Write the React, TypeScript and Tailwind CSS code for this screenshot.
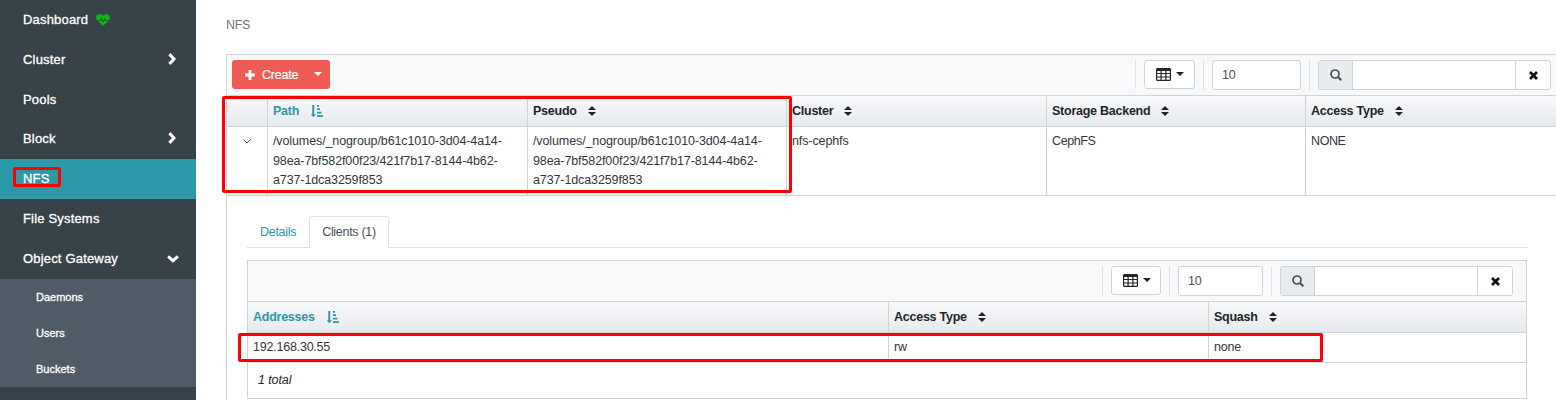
import React from "react";

const RED = "pointer-events-none absolute rounded-[2px] border-[3px] border-[#ff0000]";

function Heartbeat() {
  return (
    <svg className="h-[12px] w-[14px]" viewBox="0 0 14 12">
      <path fill="#0ab80a" d="M7 12 1.500 6.700H4.700L5.400 5.300 7.100 8.700 8.800 5.900 9.300 6.700H12.500ZM.7 5.900C-.6 4 0 0 3.700 0 5.400 0 6.300 1 7 1.800 7.700 1 8.600 0 10.300 0 14 0 14.600 4 13.300 5.900H9.800L8.800 3.900 7.200 6.900 5.500 3.300 4.200 5.900Z" />
    </svg>
  );
}
function Chevron({ down = false }: { down?: boolean }) {
  return down ? (
    <svg className="h-[8px] w-[12px]" viewBox="0 0 12 8" fill="none" stroke="#fff" strokeWidth="3">
      <path d="M1.100 1.400 6 5.700 10.900 1.400" />
    </svg>
  ) : (
    <svg className="mr-[3px] mb-[2px] h-[12px] w-[8px]" viewBox="0 0 8 12" fill="none" stroke="#fff" strokeWidth="3">
      <path d="M1.400 1.100 6 6 1.400 10.900" />
    </svg>
  );
}
function TableIcon() {
  return (
    <svg className="h-[13px] w-[15px]" viewBox="0 0 15 13">
      <path fill="#212529" fillRule="evenodd" d="M1 0H14L15 1V12L14 13H1L0 12V1ZM1.200 3V5H4.500V3ZM5.700 3V5H9.300V3ZM10.500 3V5H13.800V3ZM1.200 6V8.500H4.500V6ZM5.700 6V8.500H9.300V6ZM10.500 6V8.500H13.800V6ZM1.200 9.500V11.800H4.500V9.500ZM5.700 9.500V11.800H9.300V9.500ZM10.500 9.500V11.800H13.800V9.500Z" />
    </svg>
  );
}
function SearchIcon() {
  return (
    <svg className="h-[12px] w-[12px]" viewBox="0 0 12 12" fill="none" stroke="#495057" strokeWidth="1.7">
      <circle cx="5" cy="5" r="4" />
      <path d="m8 8 3.300 3.300" strokeWidth="2.100" />
    </svg>
  );
}
function CloseIcon() {
  return (
    <svg className="h-[9px] w-[9px]" viewBox="0 0 9 9" stroke="#111" strokeWidth="2.800">
      <path d="m1 1 7 7M8 1 1 8" />
    </svg>
  );
}
function Sort() {
  return (
    <svg className="mb-[1px] ml-[11px] h-[10px] w-[8px]" viewBox="0 0 8 10" fill="#212529">
      <path d="M4 0 8 4H0ZM0 6H8L4 10Z" />
    </svg>
  );
}
function SortAmount() {
  return (
    <svg className="ml-[12px] h-[13px] w-[12px]" viewBox="0 0 12 13" fill="#2b99a8">
      <path d="M1.300 0H3.200V9.200H4.900L2.300 12.200-.3 9.200H1.300ZM6 0H8V1.700H6ZM6 3.300H9V5H6ZM6 6.700H10.500V8.400H6ZM6 10.200H12V12H6Z" />
    </svg>
  );
}
function Caret({ color = "#212529" }: { color?: string }) {
  return (
    <svg className="h-[4px] w-[8px]" viewBox="0 0 8 4">
      <path fill={color} d="M0 0H8L4 4Z" />
    </svg>
  );
}

function NavItem({ label, cls = "h-[40px]", children }: { label: string; cls?: string; children?: React.ReactNode }) {
  return (
    <div className={`flex items-center pr-[17px] pl-[23px] text-[13px] tracking-[0.18px] text-white [-webkit-text-stroke:0.3px] ${cls}`}>
      <span>{label}</span>
      {children}
    </div>
  );
}

function Tools({ inner = false }: { inner?: boolean }) {
  return (
    <div className="flex h-[30px] items-start">
      <div className="h-[29px] w-px bg-[#dee2e6]" />
      <div className={`ml-[8px] flex h-[29px] items-center gap-[5px] rounded-[3px] border border-[#ced4da] bg-white pb-[1px] pl-[11px] ${inner ? "w-[50px]" : "w-[51px]"}`}>
        <TableIcon />
        <Caret />
      </div>
      <div className="ml-[8px] h-[30px] w-px bg-[#dee2e6]" />
      <div className={`ml-[8px] flex h-[30px] items-center rounded-[3px] border border-[#ced4da] bg-white pl-[9px] tracking-[-0.3px] text-[#495057] ${inner ? "w-[85px]" : "w-[89px]"}`}>10</div>
      <div className="ml-[8px] h-[30px] w-px bg-[#dee2e6]" />
      <div className="ml-[8px] flex h-[30px] w-[233px] overflow-hidden rounded-[3px] border border-[#ced4da] bg-white">
        <div className="flex w-[34px] items-center justify-center border-r border-[#ced4da] bg-[#e9ecef]"><SearchIcon /></div>
        <div className="flex-1" />
        <div className="flex w-[35px] items-center justify-center border-l border-[#ced4da]"><CloseIcon /></div>
      </div>
    </div>
  );
}

const HEAD = "flex h-[32px] border-y border-[#ced4da] bg-linear-to-b from-[#f8f9fb] to-[#e7eaed] font-bold tracking-[-0.25px]";
const CELL = "flex shrink-0 items-center border-r border-[#ced4da] pl-[5px]";
const PATH = "/volumes/_nogroup/b61c1010-3d04-4a14-\n98ea-7bf582f00f23/421f7b17-8144-4b62-\na737-1dca3259f853";

export default function App() {
  return (
    <div className="relative flex h-[400px] w-[1556px] overflow-hidden bg-white font-['Liberation_Sans',sans-serif] text-[12.5px] text-[#212529]">
      <nav className="h-full w-[196px] shrink-0 bg-[#374249]">
        <NavItem label="Dashboard" cls="h-[39px]"><span className="ml-[8px]"><Heartbeat /></span></NavItem>
        <NavItem label="Cluster" cls="h-[41px]"><span className="ml-auto"><Chevron /></span></NavItem>
        <NavItem label="Pools" cls="h-[39px]" />
        <NavItem label="Block"><span className="ml-auto"><Chevron /></span></NavItem>
        <NavItem label="NFS" cls="h-[40px] bg-[#2b99a8] text-[#dceff1]" />
        <NavItem label="File Systems" />
        <NavItem label="Object Gateway"><span className="ml-auto"><Chevron down /></span></NavItem>
        <div className="bg-[#4f5b66] text-[11px] text-white [-webkit-text-stroke:0.3px]">
          <div className="flex h-[36px] items-center pl-[36px]">Daemons</div>
          <div className="flex h-[36px] items-center pl-[36px]">Users</div>
          <div className="flex h-[36px] items-center pl-[36px]">Buckets</div>
        </div>
      </nav>

      <main className="flex-1 overflow-hidden pl-[30px]">
        <div className="flex h-[54px] items-center pb-[3px] tracking-[-0.3px] text-[#6c757d]">NFS</div>
        <section className="h-[346px] border-t border-l border-[#ced4da]">
          <div className="flex h-[40px] items-start justify-between bg-[#f8f9fb] pt-[5px] pr-[5px] pl-[5px]">
            <div className="flex h-[29px] w-[98px] items-center rounded-[3px] bg-[#ef5c55] pl-[13px] text-white [-webkit-text-stroke:0.2px]">
              <svg className="h-[10px] w-[10px]" viewBox="0 0 10 10" stroke="#fff" strokeWidth="2.800"><path d="M5 0V10M0 5H10" /></svg>
              <span className="ml-[7px] w-[52px] pt-[1px] tracking-[-0.2px]">Create</span>
              <span className="flex pb-[2px]"><Caret color="#fff" /></span>
            </div>
            <Tools />
          </div>
          <div className={HEAD}>
            <div className={`${CELL} w-[41px]`} />
            <div className={`${CELL} w-[260px] text-[#2b99a8]`}>Path<SortAmount /></div>
            <div className={`${CELL} w-[259px]`}>Pseudo<Sort /></div>
            <div className={`${CELL} w-[260px]`}>Cluster<Sort /></div>
            <div className={`${CELL} w-[259px]`}>Storage Backend<Sort /></div>
            <div className="flex flex-1 items-center pl-[5px]">Access Type<Sort /></div>
          </div>
          <div className="flex h-[69px] border-b border-[#ced4da] leading-[19.5px] tracking-[-0.11px] whitespace-pre text-[#33373b] [&>div]:items-start [&>div]:pt-[5px]">
            <div className={`${CELL} w-[41px]`}>
              <svg className="mt-[7px] ml-[11px] h-[5px] w-[8px]" viewBox="0 0 8 5" fill="none" stroke="#495057"><path d="M.5.5 4 4 7.500.5" /></svg>
            </div>
            <div className={`${CELL} w-[260px]`}>{PATH}</div>
            <div className={`${CELL} w-[259px]`}>{PATH}</div>
            <div className={`${CELL} w-[260px]`}>nfs-cephfs</div>
            <div className={`${CELL} w-[259px] tracking-[-0.4px]`}>CephFS</div>
            <div className="flex flex-1 pl-[5px] tracking-[-0.4px]">NONE</div>
          </div>

          <div className="pt-[20px] pl-[20px]">
            <div className="flex h-[32px] w-[1281px] border-b border-[#dee2e6] tracking-[-0.3px]">
              <div className="flex w-[62px] items-center pt-[1px] pl-[13px] text-[#2b99a8]">Details</div>
              <div className="flex h-[32px] w-[80px] items-center justify-center rounded-t-[3px] border border-b-0 border-[#dee2e6] bg-white text-[#495057]">Clients (1)</div>
            </div>
            <div className="mt-[12px] h-[139px] w-[1280px] border border-[#ced4da]">
              <div className="flex h-[40px] items-start justify-end bg-[#f8f9fb] pt-[5px] pr-[13px]"><Tools inner /></div>
              <div className={HEAD}>
                <div className={`${CELL} w-[641px] text-[#2b99a8]`}>Addresses<SortAmount /></div>
                <div className={`${CELL} w-[320px]`}>Access Type<Sort /></div>
                <div className="flex flex-1 items-center pl-[5px]">Squash<Sort /></div>
              </div>
              <div className="flex h-[30px] border-b border-[#ced4da] tracking-[-0.22px] text-[#33373b]">
                <div className={`${CELL} w-[641px]`}>192.168.30.55</div>
                <div className={`${CELL} w-[320px]`}>rw</div>
                <div className="flex flex-1 items-center pl-[5px]">none</div>
              </div>
              <div className="flex h-[35px] items-center pl-[10px] tracking-[-0.1px] italic">1 total</div>
            </div>
          </div>
        </section>
      </main>

      <div className={`${RED} top-[167px] left-[13px] h-[20px] w-[48px]`} />
      <div className={`${RED} top-[96px] left-[222px] h-[97px] w-[570px]`} />
      <div className={`${RED} top-[333px] left-[238px] h-[29px] w-[1085px]`} />
    </div>
  );
}
